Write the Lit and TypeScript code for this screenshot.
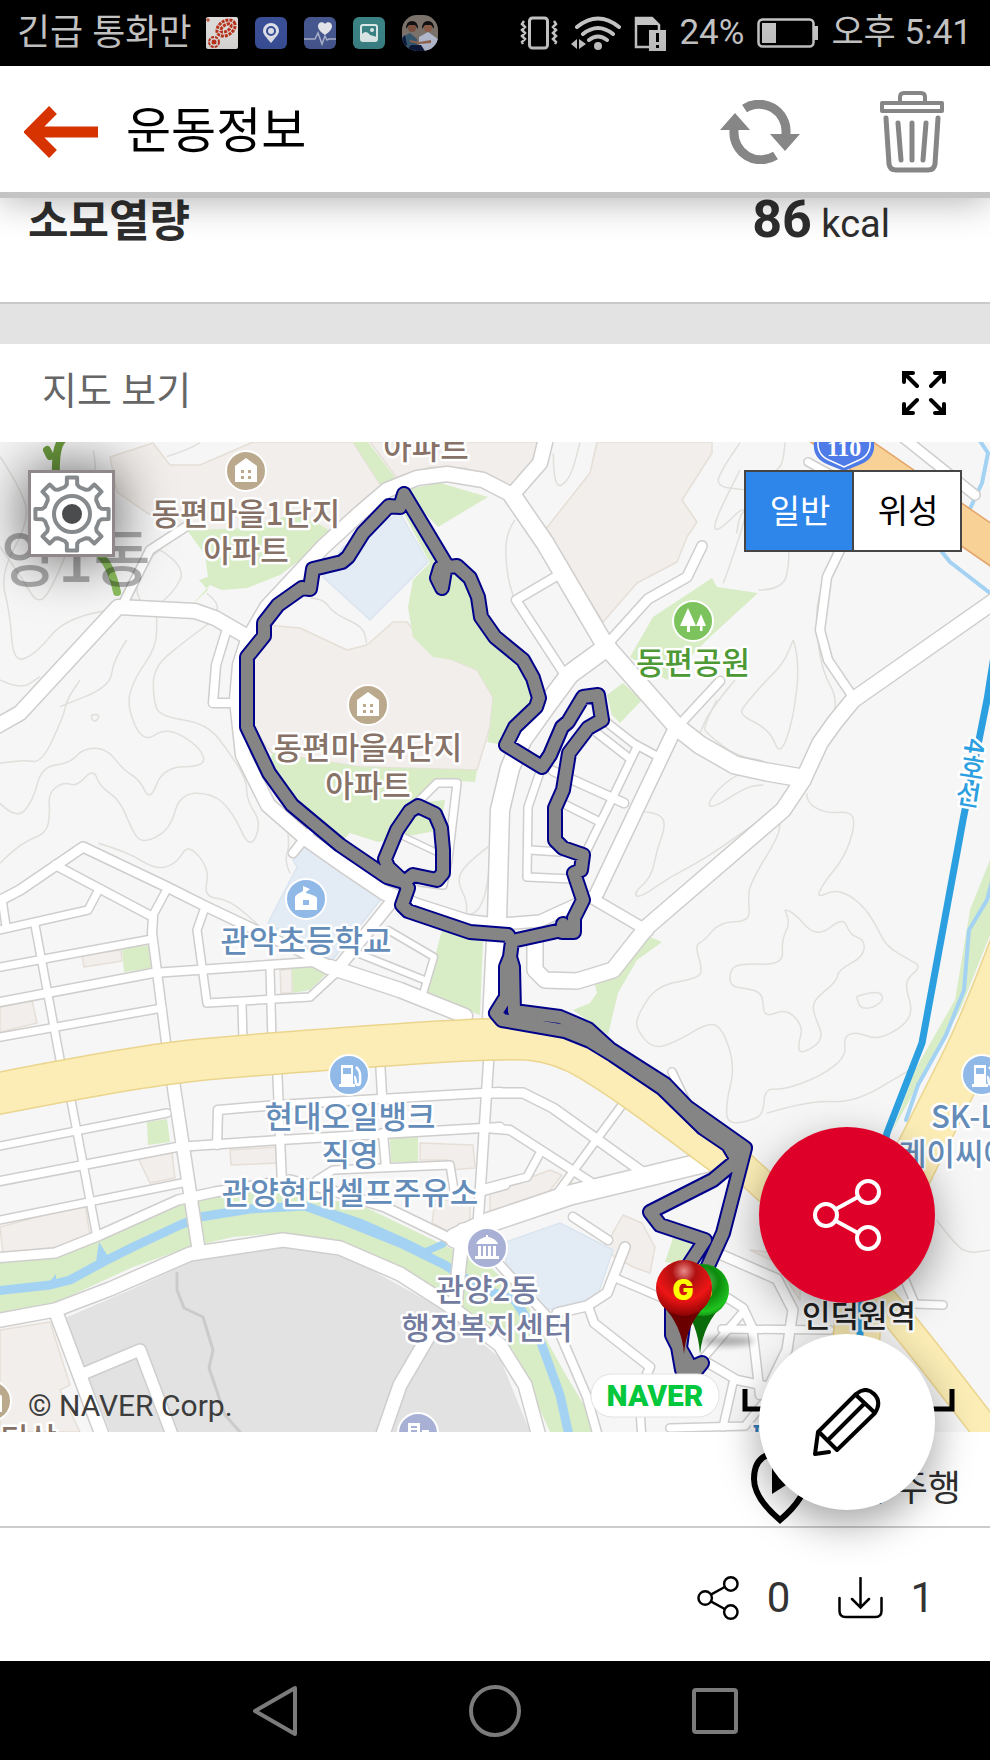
import { LitElement, html, svg, css } from "lit";
import { customElement, state } from "lit/decorators.js";

type Pts = number[];

/** Straight polyline through flat x,y pairs. */
const line = (p: Pts): string => {
  let d = `M${p[0]} ${p[1]}`;
  for (let i = 2; i < p.length; i += 2) d += `L${p[i]} ${p[i + 1]}`;
  return d;
};

/** Curve through the midpoints of flat x,y pairs. */
const smooth = (p: Pts): string => {
  let d = `M${p[0]} ${p[1]}`;
  for (let i = 2; i < p.length - 2; i += 2) {
    d += `Q${p[i]} ${p[i + 1]} ${(p[i] + p[i + 2]) / 2} ${(p[i + 1] + p[i + 3]) / 2}`;
  }
  return d + `L${p[p.length - 2]} ${p[p.length - 1]}`;
};

const BEIGE: Pts[] = [
  [110, 457, 153, 443, 170, 465, 200, 465, 253, 442, 353, 442, 382, 487, 333, 530, 193, 533, 147, 513, 117, 492],
  [370, 442, 540, 442, 530, 465, 511, 490, 465, 468, 430, 467, 397, 478],
  [597, 442, 712, 442, 712, 453, 682, 500, 697, 522, 687, 537, 677, 562, 637, 583, 603, 622, 545, 530, 590, 473],
  [267, 625, 300, 628, 347, 650, 367, 645, 393, 622, 407, 622, 427, 647, 453, 660, 477, 670, 493, 697, 490, 727, 477, 770, 360, 767, 272, 753, 250, 727, 253, 660],
  [82, 955, 121, 950, 122, 961, 84, 967],
  [0, 1002, 32, 1000, 37, 1023, 0, 1032],
  [280, 970, 292, 969, 292, 993, 281, 993],
  [420, 1143, 473, 1145, 475, 1168, 450, 1170, 448, 1160, 420, 1160],
  [230, 1150, 277, 1147, 277, 1163, 231, 1165],
  [138, 1158, 172, 1153, 175, 1178, 150, 1183],
  [0, 1227, 85, 1204, 90, 1235, 60, 1247, 3, 1253],
  [435, 1200, 470, 1200, 470, 1225, 455, 1235, 432, 1223],
  [0, 1330, 50, 1322, 70, 1385, 60, 1390, 80, 1432, 0, 1432],
  [490, 1193, 550, 1170, 562, 1175, 540, 1203, 490, 1217],
  [603, 1250, 623, 1215, 642, 1223, 655, 1247, 650, 1273, 633, 1267],
  [750, 1250, 800, 1255, 800, 1300, 775, 1262],
];

const GREEN: Pts[] = [
  [353, 442, 368, 442, 397, 480, 382, 487],
  [272, 753, 360, 767, 477, 770, 475, 782, 440, 780, 415, 800, 425, 802, 445, 800, 440, 830, 378, 842, 350, 833, 340, 843, 292, 805, 269, 773],
  [403, 490, 440, 483, 488, 497, 438, 527],
  [430, 563, 413, 580, 408, 607, 413, 637, 433, 657, 453, 660, 477, 670, 493, 697, 490, 727, 487, 742, 503, 745, 536, 707, 523, 660, 481, 617, 470, 578, 445, 563],
  [402, 510, 430, 563, 445, 563, 407, 505],
  [187, 530, 250, 528, 300, 512, 333, 533, 300, 560, 280, 575, 247, 588, 222, 590, 210, 585, 192, 605, 208, 590, 199, 580, 208, 577, 205, 555],
  [712, 578, 717, 587, 758, 593, 710, 637, 667, 680, 630, 657, 653, 617],
  [607, 695, 623, 683, 642, 700, 620, 723, 612, 715],
  [442, 930, 483, 940, 480, 1015, 425, 995],
  [122, 948, 150, 945, 152, 968, 124, 972],
  [292, 968, 313, 967, 327, 973, 310, 990, 293, 993],
  [650, 937, 662, 942, 637, 960, 618, 993, 608, 1035, 590, 1022, 573, 1010, 590, 1003, 597, 993, 595, 985, 617, 973],
  [147, 1122, 167, 1119, 170, 1142, 148, 1145],
  [390, 1138, 418, 1137, 418, 1162, 391, 1162],
  [673, 1238, 692, 1243, 685, 1265, 665, 1262],
  [570, 1180, 585, 1195, 557, 1198],
  [0, 1263, 53, 1258, 100, 1240, 180, 1205, 213, 1197, 267, 1188, 333, 1200, 367, 1208, 450, 1248, 490, 1267, 523, 1297, 563, 1370, 600, 1432, 550, 1432, 513, 1350, 490, 1325, 443, 1295, 400, 1268, 340, 1242, 283, 1233, 233, 1237, 190, 1247, 133, 1267, 83, 1290, 50, 1305, 0, 1315],
  [990, 860, 970, 910, 955, 1000, 915, 1070, 893, 1130, 915, 1090, 960, 1010, 990, 935],
];

const PALE_BLUE: Pts[] = [
  [323, 577, 343, 547, 400, 513, 428, 562, 370, 620],
  [308, 840, 382, 898, 330, 963, 268, 923, 297, 867, 293, 860],
  [503, 1243, 560, 1223, 613, 1250, 597, 1297, 547, 1310, 510, 1283],
];

const GRAY: Pts = [65, 1318, 130, 1290, 190, 1262, 283, 1246, 350, 1258, 440, 1308, 500, 1358, 530, 1432, 110, 1432];

/** [width, points] of every white road. */
const ROADS: [number, Pts][] = [
  [15, [548, 430, 540, 463, 512, 495, 483, 480, 447, 474, 417, 478, 387, 490, 360, 513, 323, 547, 267, 607, 248, 640, 240, 665, 237, 700, 243, 755, 268, 805, 308, 840, 345, 866, 385, 893, 417, 906, 467, 922, 500, 926]],
  [15, [-10, 730, 20, 713, 118, 607, 195, 611, 215, 618, 246, 636]],
  [9, [121, 608, 150, 550, 187, 526]],
  [9, [226, 632, 216, 665, 213, 703, 236, 703]],
  [18, [512, 495, 545, 543, 605, 645, 677, 727, 700, 745, 735, 765, 767, 772, 802, 778]],
  [16, [1000, 597, 853, 700, 835, 722, 820, 743, 803, 780, 783, 810, 647, 927, 613, 970, 577, 981, 545, 980, 535, 970, 535, 935]],
  [9, [840, 550, 827, 577, 820, 630, 828, 660, 855, 700]],
  [10, [611, 640, 648, 599, 687, 577, 702, 546]],
  [9, [563, 672, 516, 600, 555, 577]],
  [19, [607, 647, 570, 674, 547, 705, 522, 740, 510, 768, 500, 810, 497, 920, 492, 1020]],
  [14, [673, 733, 597, 893]],
  [11, [590, 897, 648, 931]],
  [9, [720, 681, 682, 722]],
  [8, [600, 717, 633, 743, 655, 755]],
  [8, [597, 733, 629, 758]],
  [8, [637, 747, 613, 797, 587, 850]],
  [9, [553, 771, 624, 803]],
  [8, [560, 802, 600, 822]],
  [8, [540, 772, 528, 807, 527, 877, 572, 879]],
  [8, [530, 850, 560, 852]],
  [12, [500, 924, 540, 921, 575, 905]],
  [8, [418, 802, 437, 783, 457, 783, 448, 860, 443, 885, 420, 882]],
  [6, [400, 835, 436, 852]],
  [9, [293, 853, 309, 833]],
  [12, [393, 900, 335, 972]],
  [10, [-5, 903, 20, 890, 83, 847, 167, 887, 207, 907, 333, 967]],
  [15, [330, 967, 400, 990, 465, 1016]],
  [9, [55, 865, 153, 917, 152, 933, 167, 1050]],
  [8, [2, 899, 6, 926]],
  [8, [-5, 931, 88, 910, 97, 893]],
  [8, [35, 925, 62, 1070]],
  [8, [167, 889, 152, 917]],
  [8, [-5, 968, 152, 939]],
  [9, [-5, 1003, 153, 973, 313, 962, 328, 970]],
  [8, [-5, 1038, 162, 1008]],
  [8, [204, 910, 197, 930, 207, 1003, 310, 997, 337, 972]],
  [8, [270, 968, 272, 1040]],
  [8, [242, 1005, 243, 1040]],
  [7, [388, 930, 434, 957, 422, 997]],
  [7, [357, 953, 427, 981]],
  [10, [-5, 1258, 55, 1253, 100, 1235, 178, 1200, 215, 1192, 290, 1180, 330, 1190, 385, 1207, 457, 1242]],
  [14, [-5, 1321, 55, 1310, 110, 1289, 190, 1254, 283, 1240, 340, 1248, 400, 1274, 447, 1304, 500, 1345, 525, 1385, 540, 1440]],
  [14, [57, 1315, 104, 1440]],
  [12, [85, 1373, 140, 1350, 174, 1440]],
  [14, [438, 1320, 400, 1385, 381, 1440]],
  [13, [172, 1075, 199, 1252]],
  [8, [70, 1095, 97, 1237]],
  [8, [-5, 1147, 167, 1113]],
  [9, [-5, 1182, 177, 1147, 280, 1140, 500, 1127]],
  [8, [-5, 1221, 182, 1183]],
  [9, [217, 1145, 218, 1110, 277, 1105, 500, 1092]],
  [9, [277, 1065, 282, 1185]],
  [9, [380, 1060, 382, 1095]],
  [9, [383, 1133, 386, 1167]],
  [8, [317, 1180, 333, 1170, 450, 1165, 454, 1190]],
  [10, [489, 1055, 478, 1225]],
  [9, [480, 1192, 505, 1185]],
  [14, [463, 1230, 455, 1305]],
  [20, [455, 1238, 490, 1222, 570, 1195, 715, 1160]],
  [10, [485, 1093, 523, 1093, 553, 1108, 595, 1138, 648, 1176]],
  [8, [622, 1105, 550, 1203]],
  [9, [485, 1128, 510, 1130, 600, 1188]],
  [8, [485, 1188, 527, 1177, 540, 1153]],
  [9, [573, 1217, 608, 1240]],
  [10, [625, 1247, 607, 1293, 587, 1306, 557, 1313]],
  [8, [613, 1277, 662, 1298]],
  [9, [588, 1306, 594, 1323, 650, 1367, 637, 1397]],
  [9, [500, 1265, 557, 1327, 587, 1397, 599, 1440]],
  [9, [703, 1360, 737, 1380, 775, 1388]],
  [9, [720, 1293, 743, 1308, 752, 1327, 760, 1395]],
  [10, [715, 1252, 777, 1279, 793, 1310, 787, 1350, 765, 1395]],
  [8, [722, 1329, 830, 1330]],
  [8, [700, 1362, 743, 1312]],
  [8, [733, 1383, 723, 1427]],
  [8, [640, 1410, 642, 1440]],
  [8, [670, 1428, 745, 1426, 770, 1395]],
  [8, [905, 1280, 915, 1304, 943, 1305]],
  [10, [900, 435, 975, 495]],
  [8, [808, 462, 850, 485]],
  [8, [672, 1072, 690, 1110]],
];

const YELLOW: [number, Pts][] = [
  [41, [-20, 1097, 137, 1066, 250, 1055, 500, 1037, 560, 1042, 620, 1078, 690, 1130, 725, 1156]],
  [28, [725, 1150, 790, 1210, 860, 1275, 905, 1325, 1000, 1448]],
  [46, [1030, 900, 988, 1015, 940, 1110, 890, 1210, 860, 1290, 856, 1345]],
];

const ROUTE: Pts[] = [
  [404, 494, 400, 507, 389, 506, 363, 533, 348, 557, 342, 562, 313, 569, 310, 589, 302, 588, 278, 605, 264, 623, 264, 636, 247, 657, 247, 727, 269, 773, 292, 805, 340, 845, 387, 877, 404, 882, 408, 888, 402, 905, 408, 911, 470, 932, 508, 935, 512, 942],
  [404, 882, 388, 867, 385, 859, 397, 830, 410, 811, 418, 806, 435, 814, 441, 828, 443, 850, 443, 873, 437, 880, 413, 875, 407, 880],
  [404, 494, 446, 564, 442, 588, 437, 578, 440, 568, 457, 566, 470, 578, 478, 597, 481, 617, 495, 637, 523, 660, 533, 678, 539, 698, 536, 707, 515, 727, 506, 745, 542, 767, 550, 755, 562, 727, 568, 722, 583, 697, 598, 695, 602, 720, 588, 728, 569, 753, 563, 790, 555, 808, 555, 840, 563, 848, 583, 855, 581, 870, 574, 873, 583, 900, 574, 918, 574, 932, 562, 932, 563, 924, 562, 930, 512, 941, 510, 957, 506, 967, 506, 997, 496, 1013, 502, 1020, 565, 1031, 590, 1041, 613, 1055, 662, 1088, 703, 1128, 728, 1145, 737, 1160, 713, 1180, 650, 1212, 660, 1225, 705, 1240, 690, 1263, 672, 1303, 672, 1335, 678, 1347, 682, 1370, 690, 1378, 702, 1363, 691, 1368, 680, 1348],
  [510, 957, 513, 967, 514, 1011, 560, 1017, 588, 1029, 610, 1049, 665, 1084, 687, 1107, 745, 1148, 723, 1233, 703, 1277, 685, 1310, 680, 1348],
];

/** Contour lines in third-pixel units around an origin. */
const CONTOURS: { origin: [number, number]; lines: Pts[] }[] = [
  {
    origin: [490, 700],
    lines: [
      [950, 280, 950, 310, 1010, 340, 1080, 335, 1095, 365, 1080, 430, 1050, 490, 1000, 550, 980, 595, 1030, 570, 1080, 585, 1130, 630, 1160, 680, 1190, 740, 1260, 780, 1295, 800, 1240, 845, 1270, 930, 1240, 980, 1160, 1020, 1100, 995, 1060, 1010, 1070, 1070, 990, 1130, 880, 1170, 825, 1165, 820, 1240, 790, 1260, 710, 1275, 710, 1200, 735, 1100, 700, 990, 660, 965, 560, 1025, 490, 1048, 440, 990, 440, 950, 500, 855, 630, 835, 635, 800, 615, 735, 640, 725, 690, 665, 780, 665, 775, 600, 780, 550, 865, 410, 870, 370],
      [885, 630, 905, 630, 980, 715, 1060, 650, 1080, 705, 1125, 720, 1120, 770, 1045, 810, 1040, 845, 970, 900, 970, 940, 1005, 1020, 930, 1065, 925, 1030, 940, 980, 890, 925, 820, 955, 820, 880, 770, 865, 720, 860, 720, 810, 750, 790, 880, 795, 875, 720, 900, 670, 885, 630],
      [1100, 890, 1160, 870, 1185, 895, 1150, 925, 1110, 925, 1100, 890],
      [445, 335, 500, 335, 530, 370, 500, 450, 485, 530, 430, 580, 450, 595, 540, 530, 640, 480, 790, 375],
      [680, 0, 640, 80, 650, 100, 740, 170, 850, 185, 720, 230, 650, 310, 670, 325, 770, 260, 820, 255],
      [910, -180, 930, -120, 910, 60, 870, 170, 840, 90, 750, 45, 760, 20, 830, -60, 880, -110, 910, -180],
      [700, -350, 740, -460, 780, -600, 680, -500, 670, -530, 750, -690],
      [805, -330, 880, -330, 900, -420, 890, -500, 800, -600, 750, -560, 740, -500],
      [830, 1240, 960, 1200, 1090, 1210, 1260, 1110],
      [1340, 1560, 1400, 1640, 1440, 1660, 1500, 1650],
    ],
  },
  {
    origin: [0, 700],
    lines: [
      [0, 190, 70, 178, 125, 190, 190, 50, 200, 0, 240, -60],
      [0, 490, 60, 430, 140, 400, 150, 340, 145, 280, 190, 245, 230, 260, 280, 205, 300, 260, 360, 300, 400, 400, 430, 430, 510, 390, 540, 280, 640, 280, 700, 340, 750, 450, 785, 370, 740, 300, 740, 240, 690, 160, 620, 70, 480, 50, 460, 0, 460, -100, 560, -180, 640, -240],
      [0, 310, 50, 360, 100, 300, 125, 200, 210, 190, 250, 145, 320, 145, 370, 210, 420, 240, 450, 305, 490, 200, 620, 200, 600, 140, 500, 80, 430, 130, 380, 20, 400, -60, 470, -160, 470, -250],
      [275, 45, 300, 40, 290, 65, 275, 60, 275, 45],
      [295, 430, 380, 455, 470, 510, 530, 490, 565, 430, 630, 510, 610, 590, 690, 600, 780, 680],
      [860, 370, 870, 430, 855, 480, 870, 520],
      [1230, 610, 1350, 640, 1460, 645, 1480, 300],
      [1465, 440, 1400, 490, 1370, 540, 1400, 600, 1400, 640],
    ],
  },
  {
    origin: [0, 320],
    lines: [
      [0, 410, 60, 500, 90, 600, 0, 760, 30, 880, 40, 1030, 110, 1000, 190, 900, 370, 860],
      [0, 680, 70, 780, 110, 850, 150, 820, 240, 600, 290, 460, 280, 390],
      [0, 1080, 60, 1110, 120, 1070],
      [380, 960, 340, 1020, 330, 1100, 180, 1160],
      [480, 690, 560, 740, 520, 820, 440, 880, 400, 800, 440, 720, 480, 690],
      [500, 410, 560, 390, 600, 368],
      [620, 820, 660, 850, 640, 890],
      [930, 835, 970, 835, 1000, 880, 1090, 920, 1100, 970],
    ],
  },
  {
    origin: [490, 320],
    lines: [
      [190, 400, 190, 510, 240, 480, 270, 368],
      [75, 600, 45, 640, 50, 760, 70, 830],
      [750, 368, 700, 440, 675, 500, 770, 510],
      [885, 368, 880, 430, 860, 450],
      [1010, 770, 980, 830, 980, 950, 1000, 1060, 1040, 1130, 1030, 1200],
      [735, 1080, 660, 1170, 630, 1240],
    ],
  },
];

type Label = { x: number; y: number; text: string; tone: string; anchor?: string };
const LABELS: Label[] = [
  { x: 246, y: 525, text: "동편마을1단지", tone: "brown" },
  { x: 246, y: 562, text: "아파트", tone: "brown" },
  { x: 426, y: 459, text: "아파트", tone: "brown" },
  { x: 368, y: 759, text: "동편마을4단지", tone: "brown" },
  { x: 368, y: 797, text: "아파트", tone: "brown" },
  { x: 0, y: 1450, text: "디상", tone: "brown", anchor: "start" },
  { x: 693, y: 674, text: "동편공원", tone: "green" },
  { x: 306, y: 952, text: "관악초등학교", tone: "blue" },
  { x: 350, y: 1128, text: "현대오일뱅크", tone: "blue" },
  { x: 350, y: 1166, text: "직영", tone: "blue" },
  { x: 350, y: 1204, text: "관양현대셀프주유소", tone: "blue" },
  { x: 931, y: 1128, text: "SK-LPG", tone: "blue", anchor: "start" },
  { x: 898, y: 1165, text: "케이씨에", tone: "blue", anchor: "start" },
  { x: 487, y: 1301, text: "관양2동", tone: "violet" },
  { x: 487, y: 1339, text: "행정복지센터", tone: "violet" },
  { x: 859, y: 1327, text: "인덕원역", tone: "black" },
];

const house = svg`<path fill="#fff" d="M-11 11V-5L0-13 11-5V11Z"/><path fill="#bba98d" d="M-5-1h3v3h-3zM2-1h3v3h-3zM-5 5h3v3h-3zM2 5h3v3h-3z"/>`;
const trees = svg`<path fill="#fff" d="M-5-13 3 5h-6v6h-3V5h-7ZM8-7 13 5H9.500v5h-2.500V5H3Z"/>`;
const school = svg`<path fill="#fff" d="M-11 0-11-2Q-11-4-3-8v-5l7 3-4 3v1q11 3 11 5v12h-22Z"/><path fill="#90b9e8" d="M-3 1h6v5h-6z"/>`;
const pump = svg`<path fill="#fff" d="M-8-10H4v19h2v3h-16V9h2z"/><path fill="#90b9e8" d="M-6-7h8v6h-8z"/><path fill="none" stroke="#fff" stroke-width="2.500" d="M5 2c3 0 0 8 4 8 3 0 2-7 2-10C11-5 9-6 7-8"/>`;
const civic = svg`<path fill="#fff" d="M-11-4C-9-9-3-11-1-11v-2h2v2c2 0 8 2 10 7zM-9-2h3V8h-3zM-4-2h3V8h-3zM1-2h3V8H1zM6-2h3V8H6zM-12 8h24v3h-24z"/>`;
const office = svg`<path fill="#fff" d="M-10-10H2V12h-12zM4-3h7V12H4z"/><path stroke="#a9b0d6" stroke-width="2" d="M-7-6h6M-7-2h6"/>`;

const POIS = [
  { x: 246, y: 471, fill: "#bba98d", glyph: house },
  { x: 368, y: 705, fill: "#bba98d", glyph: house },
  { x: -9, y: 1401, fill: "#bba98d", glyph: house },
  { x: 693, y: 621, fill: "#7cc35e", glyph: trees },
  { x: 306, y: 899, fill: "#90b9e8", glyph: school },
  { x: 349, y: 1075, fill: "#90b9e8", glyph: pump },
  { x: 982, y: 1075, fill: "#90b9e8", glyph: pump },
  { x: 487, y: 1248, fill: "#a9b0d6", glyph: civic },
  { x: 418, y: 1433, fill: "#a9b0d6", glyph: office },
];

/** Outline of the eight-toothed settings wheel, centred on 0,0. */
const gearPath = (() => {
  const pts: string[] = [];
  for (let i = 0; i < 8; i++) {
    for (const [off, r] of [[-15, 28], [-10, 30], [-8, 37], [8, 37], [10, 30], [15, 28]]) {
      const a = ((i * 45 + off - 90) * Math.PI) / 180;
      pts.push(`${(Math.cos(a) * r).toFixed(1)} ${(Math.sin(a) * r).toFixed(1)}`);
    }
  }
  return "M" + pts.join("L") + "Z";
})();

const shareGlyph = (w: number) => svg`
  <g fill="none" stroke="currentColor" stroke-width=${w}>
    <circle cx="13" cy="36" r="11"/><circle cx="55" cy="13" r="11"/><circle cx="55" cy="59" r="11"/>
    <path d="M23 30 45 18M23 42l22 12"/>
  </g>`;

@customElement("route-map")
export class RouteMap extends LitElement {
  static styles = css`
    :host { display: block; }
    svg { display: block; width: 100%; aspect-ratio: 1; }
    text { font-family: "Noto Sans CJK KR", sans-serif; }
    .poly { stroke-width: 1.5; stroke-linejoin: round; }
    .road { fill: none; stroke-linejoin: round; stroke-linecap: round; }
    .case { stroke: #cfcecd; }
    .fill { stroke: #fff; }
    .contour { fill: none; stroke: #e0dfdb; stroke-width: 4.5; }
    .label {
      font-size: 31px;
      font-weight: 500;
      paint-order: stroke;
      stroke: #fff;
      stroke-width: 5px;
      stroke-linejoin: round;
    }
    .brown { fill: #867267; }
    .green { fill: #4d9935; }
    .blue { fill: #648cb8; }
    .violet { fill: #737c9f; }
    .black { fill: #222; }
    .line { fill: #2b9fe0; font-size: 27px; writing-mode: vertical-rl; }
    .district { font-size: 62px; font-weight: 500; fill: #000; opacity: 0.3; }
    .shield { font: 700 24px "Liberation Serif", serif; fill: #fff; }
    .brand { font: 900 30px Roboto, sans-serif; fill: #03c73c; }
    .copy { font: 400 30px Roboto, sans-serif; fill: #3c3c3c; }
    .pin { font: 900 28px Inter, sans-serif; fill: #ff0; }
    .scale { fill: #3a7fc0; font-size: 24px; font-weight: 700; }
  `;

  render() {
    return html`
      <svg viewBox="0 442 990 990" role="img" aria-label="운동 경로 지도">
        <defs>
          <radialGradient id="red" cx=".5" cy=".2" r=".85">
            <stop offset="0" stop-color="#e88a8a"/><stop offset=".25" stop-color="#b01010"/>
            <stop offset=".6" stop-color="#ee1515"/><stop offset="1" stop-color="#7a0000"/>
          </radialGradient>
          <radialGradient id="grn" cx=".5" cy=".35" r=".75">
            <stop offset="0" stop-color="#69c469"/><stop offset=".4" stop-color="#0c8a0c"/>
            <stop offset=".75" stop-color="#1fc31f"/><stop offset="1" stop-color="#086008"/>
          </radialGradient>
          <filter id="soft" x="-30%" y="-80%" width="160%" height="260%"><feGaussianBlur stdDeviation="3"/></filter>
        </defs>
        <rect y="442" width="990" height="990" fill="#f6f6f6"/>
        ${CONTOURS.map((c) => svg`<g transform="translate(${c.origin[0]} ${c.origin[1]}) scale(.3333)">
          ${c.lines.map((l) => svg`<path class="contour" d=${smooth(l)}/>`)}</g>`)}
        ${BEIGE.map((p) => svg`<path class="poly" fill="#f1eeeb" stroke="#e6dfd7" d=${line(p) + "Z"}/>`)}
        ${GREEN.map((p) => svg`<path fill="#d8ecc6" d=${line(p) + "Z"}/>`)}
        ${PALE_BLUE.map((p) => svg`<path class="poly" fill="#e3ebf4" stroke="#dbe5ef" d=${line(p) + "Z"}/>`)}
        <path fill="#e2e2e2" d=${line(GRAY) + "Z"}/>
        <path class="road" stroke="#cbcbcb" stroke-width="3" d="M177 1273v17l7 18 19 9 10 33-4 18 16 47 15 17"/>
        <path class="road" stroke="#a3d2f3" stroke-width="9" d=${line([-5, 1291, 50, 1285, 70, 1280, 105, 1261, 133, 1247, 180, 1225, 200, 1217, 250, 1209, 305, 1206, 330, 1215, 400, 1243, 445, 1265, 480, 1288, 515, 1300, 540, 1340, 560, 1395, 570, 1440])}/>
        <path class="road" stroke="#a3d2f3" stroke-width="7" d="M330 1212l30 10 45 20 20 10M425 1252l18-8"/>
        <path fill="#a3d2f3" d="M96 1262l3-20 10 16ZM48 1284l8-10v10Z"/>
        <path class="road" stroke="#a3d2f3" stroke-width="4" d="M995 870l-8 30-18 30-5 60-18 45-28 50-12 35M978 438l10 15-6 30-14 30M942 552l8 10 44 34"/>
        ${ROADS.map(([w, p]) => svg`<path class="road case" stroke-width=${w + 2} d=${line(p)}/>`)}
        ${ROADS.map(([w, p]) => svg`<path class="road fill" stroke-width=${w - 1} d=${line(p)}/>`)}
        ${YELLOW.map(([w, p]) => svg`<path class="road" stroke-linecap="butt" stroke="#ebd58e" stroke-width=${w + 2} d=${smooth(p)}/>`)}
        ${YELLOW.map(([w, p]) => svg`<path class="road" stroke-linecap="butt" stroke="#fbedb5" stroke-width=${w - 1} d=${smooth(p)}/>`)}
        <path class="road" stroke="#e3a469" stroke-width="37" d="M810 420 1010 558"/>
        <path class="road" stroke="#f8d197" stroke-width="34" d="M810 420 1010 558"/>
        <path class="road" stroke="#2b9fe0" stroke-width="7" d="M995 650 987 700 963 820 922 1043 887 1133 860 1260v80"/>

        <path class="road" stroke="#6d9c3f" stroke-width="8" d="M62 440q-7 8-6 35M47 450l3 6"/>
        <path class="road" stroke="#8bbd5e" stroke-width="8" d="M97 552q14 12 20 40"/>
        <text class="district" x="1" y="582">양1동</text>

        <path class="road" stroke="#00008b" stroke-width="16" d=${ROUTE.map(line).join("")}/>
        <path class="road" stroke="#858585" stroke-width="12" d=${ROUTE.map(line).join("")}/>

        <path fill="#4f7be8" d="M814 442q-2 17 15 23l15 6 15-6q17-6 15-23Z"/>
        <path fill="none" stroke="#fff" stroke-width="1.500" d="M818 442q-1 14 13 19l13 6 13-6q14-5 13-19"/>
        <text class="shield" x="844" y="456" text-anchor="middle">110</text>

        ${POIS.map((p) => svg`<g transform="translate(${p.x} ${p.y})">
          <circle r="20" fill=${p.fill} stroke="#fff" stroke-width="2"/>${p.glyph}</g>`)}
        ${LABELS.map((l) => svg`<text class="label ${l.tone}" x=${l.x} y=${l.y} text-anchor=${l.anchor ?? "middle"}>${l.text}</text>`)}
        <text class="label line" transform="translate(977 739) rotate(9)">4호선</text>
        <text class="label scale" x="752" y="1444">평촌</text>

        <ellipse cx="728" cy="1341" rx="26" ry="5" fill="#000" opacity=".3" filter="url(#soft)"/>
        <path fill="#0a6b0a" d="M680 1303q18 20 20 51 3-31 25-51z"/>
        <circle cx="703" cy="1290" r="26" fill="url(#grn)"/>
        <text class="pin" x="703" y="1299" text-anchor="middle">S</text>
        <path fill="#6a0000" d="M662 1305q20 20 22 49 2-29 22-49z"/>
        <circle cx="684" cy="1288" r="28" fill="url(#red)"/>
        <text class="pin" x="683" y="1300" text-anchor="middle">G</text>

        <rect x="591" y="1374" width="128" height="43" rx="21" fill="#fff" stroke="#e2e2e2"/>
        <text class="brand" x="655" y="1406" text-anchor="middle">NAVER</text>
        <path fill="none" stroke="#000" stroke-width="5" d="M745 1389v20h207v-20"/>
        <text class="copy" x="28" y="1416">© NAVER Corp.</text>
      </svg>
    `;
  }
}

@customElement("app-root")
export class AppRoot extends LitElement {
  static styles = css`
    :host {
      display: block;
      font-family: Roboto, "Noto Sans CJK KR", sans-serif;
      color: #2e2e2e;
      background: #fff;
    }
    * { box-sizing: border-box; }
    button {
      display: flex;
      align-items: center;
      justify-content: center;
      padding: 0;
      border: 0;
      background: none;
      color: inherit;
      font: inherit;
      cursor: pointer;
    }
    svg { display: block; flex: none; }
    .status {
      display: flex;
      align-items: center;
      justify-content: space-between;
      height: 66px;
      padding: 0 18px 0 17px;
      background: #000;
      color: #c3c3c3;
      font-size: 36px;
      line-height: 48px;
    }
    .cluster { display: flex; align-items: center; }
    .notices { gap: 14px; }
    .apps { gap: 17px; }
    .signals { gap: 13px; font-size: 35px; }
    .header {
      position: relative;
      z-index: 2;
      display: flex;
      align-items: center;
      height: 132px;
      padding: 6px 46px 0 24px;
      background: #fff;
      border-bottom: 6px solid #c4c4c4;
      box-shadow: 0 2px 36px rgba(0, 0, 0, 0.32);
    }
    .title { margin: 0 auto 0 28px; font-size: 49px; line-height: 72px; font-weight: 400; color: #000; }
    .trash { margin-left: 80px; }
    .calories {
      display: flex;
      align-items: baseline;
      justify-content: space-between;
      height: 106px;
      padding: 0 100px 0 28px;
      border-bottom: 2px solid #c9c9c9;
      line-height: 44px;
    }
    .calories h2 { margin: 0; font-size: 44px; font-weight: 700; }
    .calories p { margin: 0; font-size: 38px; }
    .calories strong { font-size: 52px; line-height: 44px; }
    .gap { height: 40px; background: #e3e3e3; }
    .map-head {
      display: flex;
      align-items: center;
      justify-content: space-between;
      height: 98px;
      padding: 0 44px 0 42px;
    }
    .map-head h2 { margin: 0; padding-bottom: 4px; font-size: 38px; line-height: 56px; font-weight: 400; color: #666; }
    .map { position: relative; overflow: hidden; }
    .stage { position: relative; }
    .settings {
      position: absolute;
      top: 28px;
      left: 28px;
      width: 87px;
      height: 87px;
      background: #fff;
      border: 3px solid #8f8789;
      box-shadow: 0 0 56px rgba(0, 0, 0, 0.65);
    }
    .types {
      position: absolute;
      top: 28px;
      right: 28px;
      display: flex;
      border: 2px solid #454545;
      background: #454545;
      gap: 2px;
    }
    .types button { width: 106px; height: 78px; padding: 0 0 4px 2px; background: #fff; color: #000; font-size: 33px; }
    .types .on { background: #2f86ea; color: #fff; }
    .follow {
      display: flex;
      align-items: center;
      justify-content: flex-end;
      width: 100%;
      height: 96px;
      padding: 16px 29px 0 0;
      gap: 10px;
      border-bottom: 2px solid #ccc;
      font-size: 36px;
    }
    .follow span { padding-bottom: 4px; }
    .counts {
      display: flex;
      align-items: center;
      justify-content: flex-end;
      height: 133px;
      padding: 6px 56px 0 0;
      font-size: 42px;
      line-height: 48px;
      color: #333;
    }
    .counts button { gap: 28px; }
    .counts svg { color: #000; }
    .counts .saved { margin-left: 48px; gap: 27px; }
    .fabs {
      position: absolute;
      right: 55px;
      bottom: 151px;
      display: grid;
      gap: 31px;
    }
    .fab {
      width: 176px;
      height: 176px;
      border-radius: 50%;
      background: #fff;
      color: #000;
      box-shadow: 0 14px 40px rgba(0, 0, 0, 0.36);
    }
    .fab.share { background: #df0029; color: #fff; }
    .nav {
      display: flex;
      justify-content: center;
      height: 99px;
      background: #000;
      color: #7b7b7b;
    }
    .nav button { width: 220px; }
  `;

  @state() private mapType = "일반";

  private statusBar() {
    return html`
      <div class="status">
        <div class="cluster notices">
          <span>긴급 통화만</span>
          <div class="cluster apps">
            <svg width="32" height="32" viewBox="0 0 32 32">
              <rect width="32" height="32" rx="2" fill="#dcdad8"/>
              <g fill="none" stroke="#b8321c" stroke-dasharray="3 1">
                <ellipse cx="20" cy="11" rx="10" ry="7" transform="rotate(-35 20 11)" stroke-width="3"/>
                <ellipse cx="20" cy="11" rx="6" ry="3" transform="rotate(-35 20 11)" stroke-width="3"/>
                <circle cx="8" cy="25" r="5" stroke-width="2"/>
              </g>
              <circle cx="8" cy="25" r="2.500" fill="#b8321c"/><path stroke="#b8321c" d="M2 1v4M0 3h4"/>
            </svg>
            <svg width="32" height="32" viewBox="0 0 32 32">
              <rect width="32" height="32" rx="6" fill="#3a4f96"/>
              <path fill="#dcdfe8" fill-rule="evenodd" d="M16 26C11 20 8 17 8 14a8 8 0 1 1 16 0c0 3-3 6-8 12ZM16 9a5 5 0 1 0 0 10 5 5 0 1 0 0-10Z"/>
              <circle cx="16" cy="14" r="3" fill="#dcdfe8"/>
            </svg>
            <svg width="32" height="32" viewBox="0 0 32 32">
              <rect width="32" height="32" rx="6" fill="#46578f"/>
              <path fill="#e3e4e8" d="M21 18c-6-4-7-7-7-9 0-4 5-5 7-2 2-3 7-2 7 2 0 2-1 5-7 9Z"/>
              <path fill="none" stroke="#aab2cc" stroke-width="1.500" d="M0 22h11l3-6 4 11 3-8 2 4 2-1h7"/>
            </svg>
            <svg width="32" height="32" viewBox="0 0 32 32">
              <rect width="32" height="32" rx="6" fill="#3b8285"/>
              <rect x="8" y="8" width="16" height="16" rx="2" fill="none" stroke="#dbe7e6" stroke-width="2"/>
              <path fill="#dbe7e6" d="M8 18q5-6 9 0l7 2v4H8Z"/><circle cx="19" cy="13" r="2" fill="#dbe7e6"/>
            </svg>
            <svg width="36" height="36" viewBox="0 0 36 36">
              <clipPath id="av"><rect width="36" height="36" rx="15"/></clipPath>
              <g clip-path="url(#av)">
                <rect width="36" height="36" fill="#7b736b"/>
                <path fill="#35586e" d="M0 36V22l8-4 7 6 1 12Z"/><path fill="#b3bace" d="M17 36V22l9-5 10 7v12Z"/>
                <circle cx="10" cy="13" r="4" fill="#7a4f3e"/><circle cx="26" cy="13" r="4" fill="#8a5c48"/>
                <path fill="#120f10" d="M4 14q0-8 6-8t6 8l-3-4H7ZM20 14q0-8 6-8t6 8l-3-4h-6Z"/>
                <path fill="#0e1a3c" d="M4 36l5-6h10l4 6ZM0 24l3-4 2 10-5 2Z"/><path fill="#8f6350" d="M8 25l9 2 12-2v3l-12 1-9-2Z"/>
              </g>
            </svg>
          </div>
        </div>
        <div class="cluster signals">
          <svg width="38" height="34" viewBox="0 0 38 34" fill="none" stroke="currentColor">
            <rect x="9.500" y="2" width="18" height="30" rx="3" stroke-width="3"/>
            <path stroke-width="2.500" d="M4 5l-2 3 3 3-3 3 3 3-3 3 3 3-3 3 1 2M34 5l2 3-3 3 3 3-3 3 3 3-3 3 3 3-1 2"/>
          </svg>
          <svg width="50" height="34" viewBox="0 0 50 34" fill="none" stroke="currentColor" stroke-linecap="round">
            <path stroke-width="4" d="M6 11q21-17 42 0M12 18q15-12 30 0M18 24q9-7 18 0"/>
            <circle cx="27" cy="30" r="4" fill="currentColor" stroke="none"/>
            <path fill="currentColor" stroke="none" d="M0 28l6-5v10ZM8 23l7 5-7 5Z"/>
          </svg>
          <svg width="32" height="35" viewBox="0 0 32 35">
            <path fill="none" stroke="currentColor" stroke-width="2.500" d="M15 31H2V2h16l7 7v6"/>
            <path fill="currentColor" d="M2 1h16l8 8H2ZM15 14h17v21H15Z"/>
            <path stroke="#000" stroke-width="3" d="M23.500 17v9M23.500 29v3"/>
          </svg>
          <span>24%</span>
          <svg width="61" height="30" viewBox="0 0 61 30">
            <rect x="1.500" y="1.500" width="55" height="27" rx="4" fill="none" stroke="currentColor" stroke-width="2.500"/>
            <rect x="5" y="5" width="14" height="20" fill="currentColor"/><path fill="currentColor" d="M57 8h4v14h-4z"/>
          </svg>
          <span>오후 5:41</span>
        </div>
      </div>
    `;
  }

  render() {
    return html`
      ${this.statusBar()}
      <header class="header">
        <button aria-label="뒤로">
          <svg width="74" height="52" viewBox="0 0 74 52">
            <path fill="none" stroke="#d63300" stroke-width="11" d="M29 4 7 26l22 22M8 26h66"/>
          </svg>
        </button>
        <h1 class="title">운동정보</h1>
        <button aria-label="새로고침">
          <svg width="80" height="64" viewBox="0 0 80 64" fill="none" stroke="#868686">
            <path stroke-width="9" d="M24.500 8.500A27 27 0 0 1 66 33v4M55.500 55.500A27 27 0 0 1 14 31v-4"/>
            <path fill="#868686" stroke="none" d="M50 34h30L65 51ZM0 30h30L15 13Z"/>
          </svg>
        </button>
        <button class="trash" aria-label="삭제">
          <svg width="64" height="82" viewBox="0 0 64 82" fill="none" stroke="#868686" stroke-width="4" stroke-linecap="round" stroke-linejoin="round">
            <path d="M20 10V6q0-4 4-4h17q4 0 4 4v4"/><rect x="2" y="12" width="60" height="8"/>
            <path stroke-width="5" d="M6 27l3 46q1 6 7 6h32q6 0 7-6l3-46M18 32l3 37M32 32v37M46 32l-3 37"/>
          </svg>
        </button>
      </header>
      <main class="stage">
        <section class="calories">
          <h2>소모열량</h2>
          <p><strong>86</strong> kcal</p>
        </section>
        <div class="gap"></div>
        <div class="map-head">
          <h2>지도 보기</h2>
          <button aria-label="전체 화면">
            <svg width="44" height="44" viewBox="0 0 44 44" fill="none" stroke="#000" stroke-width="4" stroke-linecap="round">
              <path d="M2 11V2h9M2 2l13 13M33 2h9v9M42 2 29 15M2 33v9h9M2 42l13-13M42 33v9h-9M42 42 29 29"/>
            </svg>
          </button>
        </div>
        <div class="map">
          <route-map></route-map>
          <button class="settings" aria-label="지도 설정">
            <svg width="80" height="80" viewBox="-40 -40 80 80" fill="none" stroke="#868a8d" stroke-width="4" stroke-linejoin="round">
              <path d=${gearPath}/><circle r="18"/><circle r="10" fill="#4a4c4e" stroke="none"/>
            </svg>
          </button>
          <div class="types">
            ${["일반", "위성"].map(
              (t) => html`<button
                class=${t === this.mapType ? "on" : ""}
                aria-pressed=${t === this.mapType}
                @click=${() => (this.mapType = t)}
              >${t}</button>`
            )}
          </div>
        </div>
        <button class="follow">
          <svg width="60" height="76" viewBox="0 0 60 76">
            <path fill="none" stroke="#000" stroke-width="6" d="M30 71Q4 49 4 30 4 4 30 4t26 26q0 19-26 41Z"/>
            <path d="M22 18v27l22-14Z"/>
          </svg>
          <span>모의 주행</span>
        </button>
        <footer class="counts">
          <button aria-label="공유 0">
            <svg width="42" height="44" viewBox="0 0 68 72">${shareGlyph(4)}</svg>
            <span>0</span>
          </button>
          <button class="saved" aria-label="저장 1">
            <svg width="45" height="42" viewBox="0 0 45 42" fill="none" stroke="#000" stroke-width="2.500" stroke-linecap="round">
              <path d="M1.500 21v13q0 6 6 6h30q6 0 6-6V21M22.500 1v29M14 22l8.500 8.500L31 22"/>
            </svg>
            <span>1</span>
          </button>
        </footer>
        <div class="fabs">
          <button class="fab share" aria-label="공유">
            <svg width="68" height="72" viewBox="0 0 68 72">${shareGlyph(4)}</svg>
          </button>
          <button class="fab" aria-label="편집">
            <svg width="68" height="68" viewBox="0 0 68 68" fill="none" stroke="#000" stroke-width="4" stroke-linejoin="round" stroke-linecap="round">
              <path d="M16 64l-14 2 3-22L43 6q10-8 18 0 8 8 1 19L24 62 6 44M43 7l18 17M51 16 15 52"/>
            </svg>
          </button>
        </div>
      </main>
      <nav class="nav" aria-label="시스템">
        <button aria-label="뒤로가기">
          <svg width="46" height="52" viewBox="0 0 46 52" fill="none" stroke="currentColor" stroke-width="4" stroke-linejoin="round"><path d="M43 3v46L3 26Z"/></svg>
        </button>
        <button aria-label="홈">
          <svg width="52" height="52" viewBox="0 0 52 52" fill="none" stroke="currentColor" stroke-width="4"><circle cx="26" cy="26" r="24"/></svg>
        </button>
        <button aria-label="최근 앱">
          <svg width="46" height="46" viewBox="0 0 46 46" fill="none" stroke="currentColor" stroke-width="4"><rect x="2" y="2" width="42" height="42" rx="2"/></svg>
        </button>
      </nav>
    `;
  }
}
